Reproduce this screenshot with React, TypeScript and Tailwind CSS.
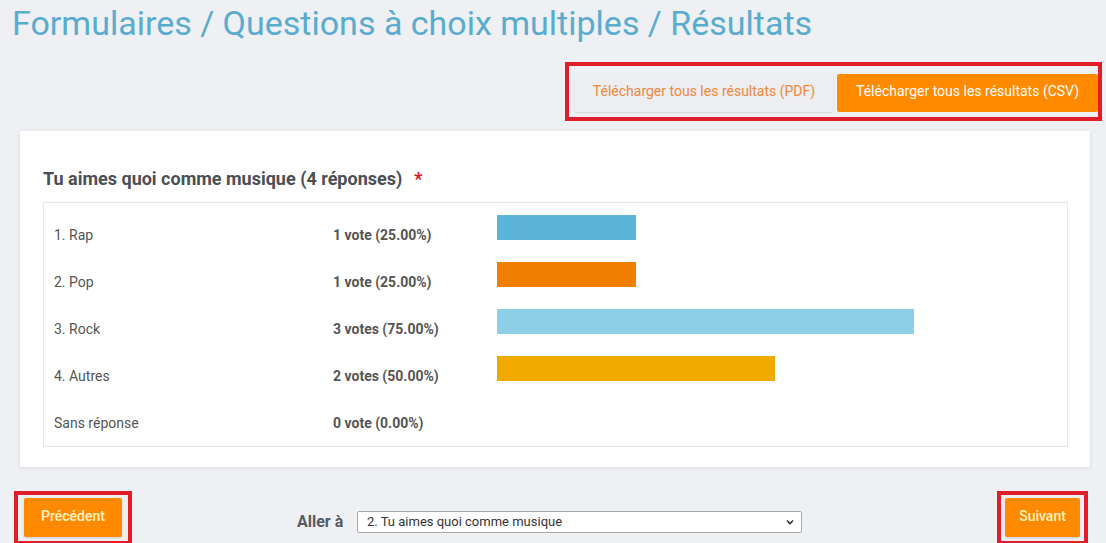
import * as React from "react"

type Choice = {
  label: string
  votes: string
  percent: number
  color: string
}

const CHOICES: Choice[] = [
  { label: "1. Rap", votes: "1 vote (25.00%)", percent: 25, color: "#5bb5d9" },
  { label: "2. Pop", votes: "1 vote (25.00%)", percent: 25, color: "#f07f00" },
  { label: "3. Rock", votes: "3 votes (75.00%)", percent: 75, color: "#8dcfe7" },
  { label: "4. Autres", votes: "2 votes (50.00%)", percent: 50, color: "#f0aa00" },
  { label: "Sans réponse", votes: "0 vote (0.00%)", percent: 0, color: "transparent" },
]

// full bar length for 100%
const BAR_MAX = 556

function ChoiceRow({ choice }: { choice: Choice }) {
  return (
    <div className="flex h-[47px] items-start">
      <div className="w-[279px] pt-[1px] text-[14px] leading-[47px] text-[#555]">{choice.label}</div>
      <div className="w-[164px] pt-[1px] text-[14px] font-bold leading-[47px] text-[#555]">{choice.votes}</div>
      {choice.percent > 0 ? (
        <div
          className="mt-[4px] h-[25px]"
          style={{ width: (BAR_MAX * choice.percent) / 100, backgroundColor: choice.color }}
        />
      ) : null}
    </div>
  )
}

export default function App() {
  return (
    <div
      className="min-h-screen w-full overflow-hidden bg-[#eef0f3]"
      style={{ fontFamily: "Roboto, 'Liberation Sans', sans-serif" }}
    >
      <h1 className="pl-[12px] pt-[3px] text-[34px] font-normal leading-[40px] text-[#5aaccf]">
        Formulaires / Questions à choix multiples / Résultats
      </h1>

      <div className="mt-[19px] flex justify-end pr-[4px]">
        <div className="flex gap-[4px] border-4 border-[#e21d2a] pb-[5px] pl-[6px] pr-0 pt-[8px]">
          <button
            type="button"
            className="h-[38px] w-[258px] rounded-[2px] bg-[#eceef1] pb-[3px] text-[14px] text-[#f0883a] shadow-[0_1px_2px_rgba(0,0,0,0.12)]"
          >
            Télécharger tous les résultats (PDF)
          </button>
          <button
            type="button"
            className="h-[38px] w-[261px] rounded-[2px] bg-[#ff8a00] pb-[3px] text-[14px] text-white"
          >
            Télécharger tous les résultats (CSV)
          </button>
        </div>
      </div>

      <div className="ml-[20px] mt-[10px] w-[1070px] bg-white pb-[20px] pl-[23px] pr-[22px] pt-[35px] shadow-[0_1px_4px_rgba(0,0,0,0.1)]">
        <div className="flex h-[24px] items-center text-[18px] font-bold text-[#4a4e55]">
          Tu aimes quoi comme musique (4 réponses)
          <span className="ml-[12px] text-[#d0141c]">*</span>
        </div>
        <div className="mt-[12px] border border-[#e6e7e9] pl-[10px] pt-[8px]">
          {CHOICES.map((c) => (
            <ChoiceRow key={c.label} choice={c} />
          ))}
        </div>
      </div>

      <div className="mt-[24px] flex items-start pl-[14px] pr-[18px]">
        <div className="border-4 border-[#e21d2a] px-[6px] pb-[4px] pt-[3px]">
          <button
            type="button"
            className="h-[39px] w-[98px] rounded-[2px] bg-[#ff8a00] pb-[2px] text-[14px] font-medium text-[#fff3c4] shadow-[0_1px_2px_rgba(0,0,0,0.15)]"
          >
            Précédent
          </button>
        </div>

        <div className="ml-[165px] mt-[19px] flex items-center">
          <span className="w-[60px] text-[16px] font-bold text-[#555b63]">Aller à</span>
          <div className="flex h-[22px] w-[445px] items-center justify-between rounded-[2px] border border-[#a9a9a9] bg-white pl-[9px] pr-[6px] text-[13px] text-[#333]">
            <span>2. Tu aimes quoi comme musique</span>
            <svg width="10" height="10" viewBox="0 0 10 10" fill="none">
              <path d="M2 3.5 L5 6.5 L8 3.5" stroke="#333" strokeWidth="1.6" />
            </svg>
          </div>
        </div>

        <div className="ml-auto border-4 border-[#e21d2a] px-[4px] pb-[4px] pt-[3px]">
          <button
            type="button"
            className="h-[39px] w-[75px] rounded-[2px] bg-[#ff8a00] pb-[2px] text-[14px] font-medium text-[#fff3c4] shadow-[0_1px_2px_rgba(0,0,0,0.15)]"
          >
            Suivant
          </button>
        </div>
      </div>
    </div>
  )
}
